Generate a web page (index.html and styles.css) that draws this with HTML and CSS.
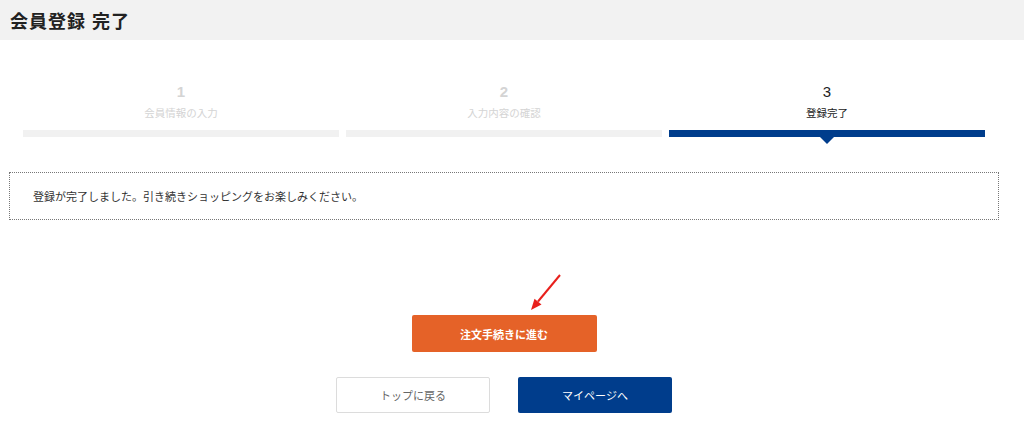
FILE: index.html
```html
<!DOCTYPE html>
<html lang="ja">
<head>
  <meta charset="UTF-8">
  <meta name="viewport" content="width=device-width, initial-scale=1.0">
  <title>会員登録 完了</title>
  <link rel="stylesheet" href="styles.css">
</head>
<body>
  <div class="page">
    <header class="page-header">
      <h1>会員登録 完了</h1>
    </header>

    <div class="container">
      <ol class="steps">
        <li class="step">
          <span class="step-num">1</span>
          <span class="step-label">会員情報の入力</span>
          <span class="step-bar"></span>
        </li>
        <li class="step">
          <span class="step-num">2</span>
          <span class="step-label">入力内容の確認</span>
          <span class="step-bar"></span>
        </li>
        <li class="step active">
          <span class="step-num">3</span>
          <span class="step-label">登録完了</span>
          <span class="step-bar"></span>
        </li>
      </ol>

      <div class="message-box">
        <p>登録が完了しました。引き続きショッピングをお楽しみください。</p>
      </div>

      <div class="actions">
        <a href="#" class="btn btn-order">注文手続きに進む</a>
        <div class="btn-row">
          <a href="#" class="btn btn-top">トップに戻る</a>
          <a href="#" class="btn btn-mypage">マイページへ</a>
        </div>
      </div>
    </div>

    <svg class="arrow" width="44" height="44" viewBox="0 0 44 44">
      <line x1="38" y1="5" x2="16" y2="31.5" stroke="#e8201c" stroke-width="2"/>
      <polygon points="9,40 19.5,34.4 12.5,28.7" fill="#e8201c"/>
    </svg>
  </div>
</body>
</html>
```

FILE: styles.css
```css
body {
  margin: 0;
  padding: 0;
  font-family: "Liberation Sans", "Noto Sans CJK JP", sans-serif;
  color: #333;
  background-color: #fff;
}

.page {
  position: relative;
  width: 1024px;
}

.page-header {
  height: 40px;
  background-color: #f2f2f2;
  display: flex;
  align-items: center;
  padding-left: 10px;
}

.page-header h1 {
  margin: 0;
  font-size: 18px;
  font-weight: bold;
  color: #222;
  letter-spacing: 1px;
}

.container {
  width: 990px;
  margin-left: 9px;
}

.steps {
  list-style: none;
  margin: 0;
  padding: 43px 14px 0;
  display: grid;
  grid-template-columns: repeat(3, 1fr);
  gap: 7px;
}

.step {
  display: flex;
  flex-direction: column;
  align-items: center;
  color: #d4d4d4;
}

.step-num {
  font-size: 15px;
  line-height: 18px;
  font-weight: bold;
}

.step-label {
  margin-top: 4px;
  font-size: 10.5px;
  line-height: 16px;
}

.step-bar {
  position: relative;
  align-self: stretch;
  margin-top: 9px;
  height: 7px;
  background-color: #f1f1f1;
}

.step.active {
  color: #222;
}

.step.active .step-num {
  font-weight: normal;
}

.step.active .step-bar {
  background-color: #003d8c;
}

.step.active .step-bar::after {
  content: "";
  position: absolute;
  left: 50%;
  top: 7px;
  margin-left: -7px;
  border-left: 7px solid transparent;
  border-right: 7px solid transparent;
  border-top: 7px solid #003d8c;
}

.message-box {
  margin-top: 35px;
  height: 46px;
  border: 1px dotted #777;
  display: flex;
  align-items: center;
  padding: 0 23px;
}

.message-box p {
  margin: 0;
  font-size: 11px;
  color: #333;
}

.actions {
  display: flex;
  flex-direction: column;
  align-items: center;
  margin-top: 95px;
}

.btn {
  display: flex;
  align-items: center;
  justify-content: center;
  box-sizing: border-box;
  text-decoration: none;
  font-size: 11px;
  border-radius: 2px;
}

.btn-order {
  width: 185px;
  height: 37px;
  background-color: #e56228;
  color: #fff;
  font-weight: bold;
}

.btn-row {
  display: flex;
  gap: 28px;
  margin-top: 25px;
}

.btn-top,
.btn-mypage {
  width: 154px;
  height: 36px;
}

.btn-top {
  border: 1px solid #dcdcdc;
  color: #666;
  background-color: #fff;
}

.btn-mypage {
  background-color: #003d8c;
  color: #fff;
}

.arrow {
  position: absolute;
  left: 522px;
  top: 270px;
}
```
